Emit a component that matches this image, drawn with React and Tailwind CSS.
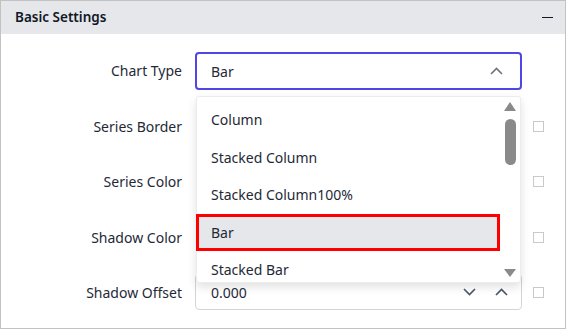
import { useState } from "react";

const font = { fontFamily: '"Segoe UI", "Noto Sans", "Open Sans", sans-serif' };

const options = ["Column", "Stacked Column", "Stacked Column100%", "Bar", "Stacked Bar"];

function Chevron({ up, className }) {
  return (
    <svg width="13" height="8" viewBox="0 0 13 8" className={className} fill="none" stroke="currentColor" strokeWidth="1.6">
      {up ? <path d="M1 7 L6.5 1.5 L12 7" /> : <path d="M1 1 L6.5 6.5 L12 1" />}
    </svg>
  );
}

function Checkbox() {
  return <div className="w-[11px] h-[11px] border border-[#c9c9c9] bg-white" />;
}

function Row({ label, children, check = true }) {
  return (
    <div className="flex items-center h-[37px]">
      <div className="w-[181px] text-right text-[14px] text-[#1f2937]">{label}</div>
      <div className="ml-[13px] w-[327px] h-full relative">{children}</div>
      <div className="ml-[11px]">{check && <Checkbox />}</div>
    </div>
  );
}

export default function App() {
  const [value] = useState("Bar");

  return (
    <div className="w-[567px] h-[329px] bg-white" style={font}>
      <div className="w-[566px] h-[329px] border border-[#c2c2c2] flex flex-col">
        <div className="h-[33px] bg-[#e5e7eb] flex items-center justify-between px-[14px]">
          <span className="text-[13.5px] font-semibold text-[#111827]">Basic Settings</span>
          <span className="w-[11px] h-[1.5px] bg-[#111827] mr-[-2px]" />
        </div>
        <div className="flex flex-col gap-[18.5px] pt-[18px]">
          <Row label="Chart Type" check={false}>
            <div className="h-[38px] border-2 border-[#4f46e5] rounded-[4px] flex items-center justify-between pl-[14px] pr-[17px] text-[14px] text-[#1f2937]">
              <span>{value}</span>
              <Chevron up className="text-[#6b7280]" />
            </div>
            <div className="absolute z-10 left-[1px] top-[44px] w-[325px] h-[187px] bg-white border border-[#ececec] rounded-[3px] shadow-[0_4px_10px_rgba(0,0,0,0.12)] flex">
              <div className="flex-1 pt-[4px]">
                {options.map((o) => (
                  <div
                    key={o}
                    className={
                      o === value
                        ? "h-[37.5px] flex items-center pl-[12px] text-[14px] text-[#1f2937] bg-[#e5e7eb] border-[3px] border-[#ff0000] -ml-px"
                        : "h-[37.5px] flex items-center pl-[14px] text-[14px] text-[#1f2937]"
                    }
                  >
                    {o}
                  </div>
                ))}
              </div>
              <div className="w-[20px] flex flex-col items-center pt-[5px]">
                <div className="w-0 h-0 border-l-[6.5px] border-r-[6.5px] border-b-[9px] border-l-transparent border-r-transparent border-b-[#8a8a8a]" />
                <div className="mt-[8px] w-[11px] h-[46px] rounded-full bg-[#8a8a8a]" />
                <div className="flex-1" />
                <div className="mb-[5px] w-0 h-0 border-l-[6.5px] border-r-[6.5px] border-t-[8px] border-l-transparent border-r-transparent border-t-[#8a8a8a]" />
              </div>
            </div>
          </Row>
          <Row label="Series Border" />
          <Row label="Series Color" />
          <Row label="Shadow Color" />
          <Row label="Shadow Offset">
            <div className="h-[36px] border border-[#d1d5db] rounded-[4px] flex items-center pl-[15px] pr-[13px] text-[14px] text-[#1f2937]">
              <span className="flex-1">0.000</span>
              <Chevron className="text-[#475569] mr-[19px]" />
              <Chevron up className="text-[#475569]" />
            </div>
          </Row>
        </div>
      </div>
    </div>
  );
}
